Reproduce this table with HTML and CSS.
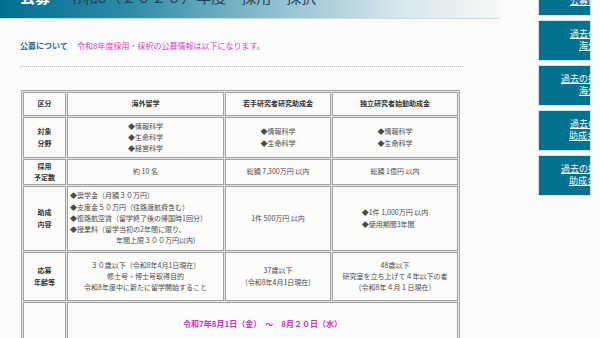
FILE: index.html
```html
<!DOCTYPE html>
<html lang="ja">
<head>
<meta charset="utf-8">
<link rel="stylesheet" href="styles.css">
</head>
<body>
<div class="page">
  <div class="main">
    <div class="head">
      <span class="head-tag">公募</span>
      <span class="head-title">令和8（２０２６）年度　採用・採択</span>
    </div>
    <div class="intro">
      <span class="intro-label">公募について</span>
      <span class="intro-msg">令和8年度採用・採択の公募情報は以下になります。</span>
    </div>
    <div class="rule"></div>
    <table class="grid">
      <tr class="r1">
        <th class="c1">区分</th>
        <th class="c2">海外留学</th>
        <th class="c3">若手研究者研究助成金</th>
        <th class="c4">独立研究者始動助成金</th>
      </tr>
      <tr class="r2">
        <th>対象<br>分野</th>
        <td>◆情報科学<br>◆生命科学<br>◆経営科学</td>
        <td>◆情報科学<br>◆生命科学</td>
        <td>◆情報科学<br>◆生命科学</td>
      </tr>
      <tr class="r3">
        <th>採用<br>予定数</th>
        <td>約 10 名</td>
        <td>総額 7,300万円 以内</td>
        <td>総額 1億円 以内</td>
      </tr>
      <tr class="r4">
        <th>助成<br>内容</th>
        <td class="left">◆奨学金（月額３０万円）<br>◆支度金５０万円（往路渡航費含む）<br>◆復路航空賃（留学終了後の帰国時1回分）<br>◆授業料（留学当初の2年間に限り、<br><span class="indent">年間上限３００万円以内)</span></td>
        <td>1件 500万円 以内</td>
        <td><span class="block">◆1件 1,000万円 以内<br>◆使用期間3年間</span></td>
      </tr>
      <tr class="r5">
        <th>応募<br>年齢等</th>
        <td>３０歳以下（令和8年4月1日現在）<br>修士号・博士号取得目的<br>令和8年度中に新たに留学開始すること</td>
        <td>37歳以下<br>(令和8年4月1日現在)</td>
        <td>48歳以下<br>研究室を立ち上げて４年以下の者<br>（令和8年４月１日現在）</td>
      </tr>
      <tr class="r6">
        <th></th>
        <td colspan="3" class="period">令和7年8月1日（金）　～　8月２０日（水）</td>
      </tr>
    </table>
  </div>
  <div class="side">
    <a class="box"><span class="lab">過去の公募情報<br>公募情報一覧</span></a>
    <a class="box"><span class="lab">過去の採用者<br>海外留学</span></a>
    <a class="box"><span class="lab">過去の採択者一覧<br>海外留学</span></a>
    <a class="box"><span class="lab">過去の研究者<br>助成金 採択者</span></a>
    <a class="box"><span class="lab">過去の採択者一覧<br>助成金 採択者</span></a>
  </div>
</div>
</body>
</html>
```

FILE: styles.css
```css
* { box-sizing: border-box; }
html, body { margin: 0; padding: 0; }
body {
  background: #fbfbf9;
  font-family: "Noto Sans CJK JP", "Noto Sans", sans-serif;
  color: #444;
  overflow: hidden;
  height: 338px;
}
.page { display: flex; align-items: flex-start; }
.main { width: 500px; flex: none; }
.head {
  height: 37px;
  margin-top: -18px;
  border-bottom: 1px solid #c8dde4;
  background: linear-gradient(to right, #006f8f 0%, #2d89a5 25%, #8fc0cf 55%, #d6e7eb 80%, #f7f8f6 100%);
  display: flex;
  align-items: flex-start;
  line-height: 29px;
  padding-left: 20px;
}
.head-tag { color: #fff; font-size: 15px; font-weight: bold; width: 48px; }
.head-title { color: #1f4356; font-size: 15px; }
.intro {
  margin-top: 21px;
  padding-left: 20px;
  line-height: 12px;
  font-size: 8px;
  display: flex;
}
.intro-label { color: #2c6d8c; font-weight: bold; width: 57px; }
.intro-msg { color: #d23fd2; }
.rule {
  margin-top: 14px;
  margin-left: 20px;
  width: 443px;
  border-top: 1px dotted #b4b4b4;
}
.grid {
  margin-top: 23px;
  margin-left: 21px;
  border: 1px solid #a6a6a6;
  border-spacing: 1px;
  background: #e4e4e2;
  font-size: 7px;
  line-height: 11.3px;
  color: #4a4a4a;
  table-layout: fixed;
}
.grid th, .grid td {
  border: 1px solid #a2a2a2;
  background: #fcfcfa;
  text-align: center;
  vertical-align: middle;
  padding: 0 2px;
  white-space: nowrap;
  overflow: hidden;
}
.grid th { font-weight: bold; color: #333; }
.c1 { width: 43px; }
.c2 { width: 157px; }
.c3 { width: 106px; }
.c4 { width: 126px; }
.r1 th { height: 24px; }
.r2 th, .r2 td { height: 41px; }
.r3 th, .r3 td { height: 26px; }
.r4 th, .r4 td { height: 65px; }
.r5 th, .r5 td { height: 49px; }
.r6 th, .r6 td { height: 44px; }
.left { text-align: left !important; }
.indent { padding-left: 46px; }
.block { display: inline-block; text-align: left; }
.period {
  color: #cc33cc;
  font-weight: bold;
  font-size: 8px;
}
.side {
  width: 53px;
  margin-left: 38px;
  margin-top: -25px;
  display: flex;
  flex-direction: column;
  gap: 4px;
  flex: none;
}
.box {
  display: block;
  height: 41px;
  border: 1px solid #d0e3e9;
  background: #00718f;
  overflow: hidden;
}
.lab {
  display: block;
  width: 116px;
  padding-top: 7px;
  text-align: center;
  color: #fff;
  font-size: 9px;
  line-height: 12px;
  text-decoration: underline;
  white-space: nowrap;
}
```
